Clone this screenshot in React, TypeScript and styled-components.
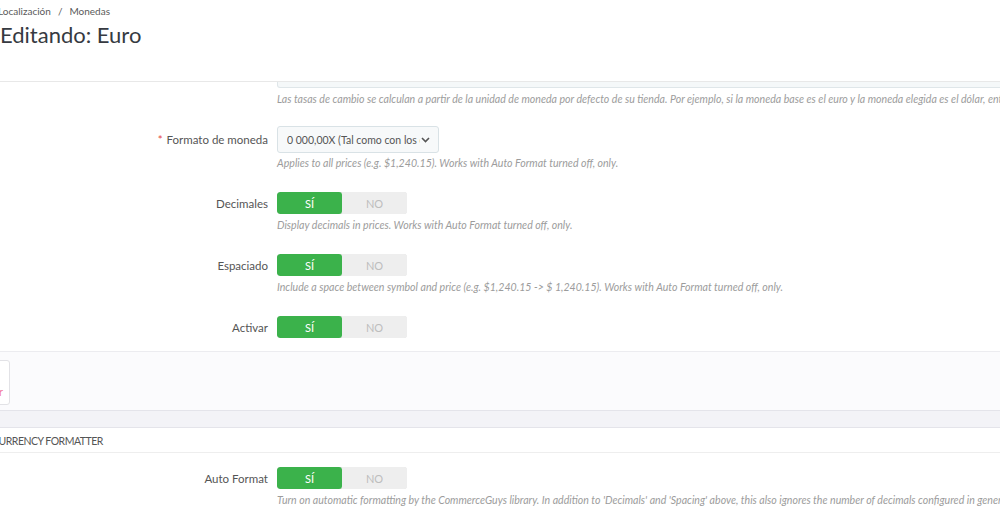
import React from 'react'
import styled, { createGlobalStyle } from 'styled-components'

const GlobalStyle = createGlobalStyle`
  html, body {
    margin: 0;
    padding: 0;
    background: #ffffff;
    overflow: hidden;
  }
  body {
    font-family: Lato, "Open Sans", Arial, sans-serif;
    color: #555555;
  }
`

const Page = styled.div`
  width: 1100px;
  margin-left: -60px;
`

const Header = styled.header`
  height: 82px;
  padding-left: 58px;
  border-bottom: 1px solid #e8e8e8;
  box-sizing: border-box;
  background: #ffffff;
`

const Breadcrumb = styled.div`
  padding-top: 4px;
  font-size: 10px;
  line-height: 14px;
  color: #5a5a5a;

  span {
    margin: 0 7px;
  }
`

const Title = styled.h1`
  margin: 3px 0 0 2px;
  font-size: 22px;
  font-weight: 400;
  line-height: 28px;
  color: #363a41;
`

const Panel = styled.section`
  background: #ffffff;
`

const Form = styled.div<{ $bottom?: number }>`
  display: flex;
  flex-direction: column;
  padding-bottom: ${(p) => (p.$bottom ?? 13)}px;
`

const Group = styled.div<{ $gap?: number }>`
  display: grid;
  grid-template-columns: 328px 1fr;
  column-gap: 9px;
  margin-bottom: ${(p) => (p.$gap ?? 22)}px;
`

const Label = styled.label`
  grid-column: 1;
  display: flex;
  align-items: center;
  justify-content: flex-end;
  font-size: 11.5px;
  color: #555555;

  b {
    color: #e5483f;
    font-weight: 400;
    margin-right: 4px;
  }
`

const Control = styled.div`
  grid-column: 2;
  display: flex;
  align-items: center;
`

const Help = styled.p<{ $top?: number }>`
  grid-column: 2;
  margin: ${(p) => (p.$top ?? 4)}px 0 0;
  font-size: 10.6px;
  line-height: 14px;
  font-style: italic;
  color: #9c9c9c;
  white-space: nowrap;
`

const InputStub = styled.div`
  grid-column: 2;
  height: 5px;
  background: #f5f8f9;
  border: 1px solid #dfe6e9;
  border-top: none;
  border-radius: 0 0 3px 3px;
`

const Select = styled.div`
  width: 162px;
  height: 27px;
  box-sizing: border-box;
  display: flex;
  align-items: center;
  justify-content: space-between;
  padding: 0 8px 0 9px;
  background: #f7f9fa;
  border: 1px solid #d9e2e6;
  border-radius: 3px;
  font-size: 10.5px;
  color: #555555;
  white-space: nowrap;
  overflow: hidden;

  span {
    overflow: hidden;
    width: 133px;
  }
`

const Switch = styled.div`
  display: flex;
  width: 130px;
  height: 22px;
  border-radius: 3px;
  overflow: hidden;
  box-shadow: inset 0 0 0 1px #e2e2e2;
`

const SwitchHalf = styled.span<{ $on?: boolean }>`
  flex: 1;
  display: flex;
  align-items: center;
  justify-content: center;
  font-size: 11px;
  background: ${(p) => (p.$on ? '#3bb24b' : '#eeeeee')};
  color: ${(p) => (p.$on ? '#ffffff' : '#bdbdbd')};
  border-radius: ${(p) => (p.$on ? '3px' : '0')};
`

const Footer = styled.div`
  height: 59px;
  box-sizing: border-box;
  display: flex;
  align-items: center;
  background: #fbfbfd;
  border-top: 1px solid #ececf0;
`

const FooterButton = styled.button`
  width: 70px;
  height: 45px;
  margin-top: 2px;
  display: flex;
  flex-direction: column;
  align-items: center;
  justify-content: flex-end;
  padding: 0 0 6px 14px;
  background: #ffffff;
  border: 1px solid #e2e2e6;
  border-radius: 3px;
  font-family: inherit;
  font-size: 11px;
  color: #f27fa0;
`

const Spacer = styled.div`
  height: 18px;
  box-sizing: border-box;
  background: #f3f3f7;
  border-top: 1px solid #e4e4ea;
  border-bottom: 1px solid #e4e4ea;
`

const PanelHeading = styled.h3`
  margin: 0 0 14px;
  height: 25px;
  box-sizing: border-box;
  padding: 6px 0 0 52px;
  font-size: 10.5px;
  letter-spacing: -0.5px;
  font-weight: 400;
  line-height: 14px;
  text-transform: uppercase;
  color: #555555;
  border-bottom: 1px solid #eeeeee;
`

const YesNo = () => (
  <Switch>
    <SwitchHalf $on>SÍ</SwitchHalf>
    <SwitchHalf>NO</SwitchHalf>
  </Switch>
)

const Chevron = () => (
  <svg width="9" height="6" viewBox="0 0 9 6">
    <path d="M1 1l3.5 3.5L8 1" fill="none" stroke="#555" strokeWidth="1.6" />
  </svg>
)

export default function App(): React.ReactElement {
  return (
    <Page>
      <GlobalStyle />
      <Header>
        <Breadcrumb>
          Localización<span>/</span>Monedas
        </Breadcrumb>
        <Title>Editando: Euro</Title>
      </Header>

      <Panel>
        <Form>
          <Group $gap={20}>
            <InputStub />
            <Help>
              Las tasas de cambio se calculan a partir de la unidad de moneda por defecto de su tienda. Por ejemplo, si la moneda base es el euro y la moneda elegida es el dólar, entonces escriba "1.20" (1&euro; = $1.20).
            </Help>
          </Group>

          <Group>
            <Label>
              <b>*</b>Formato de moneda
            </Label>
            <Control>
              <Select>
                <span>0 000,00X (Tal como con los euros)</span>
                <Chevron />
              </Select>
            </Control>
            <Help $top={3}>
              Applies to all prices (e.g. $1,240.15). Works with Auto Format turned off, only.
            </Help>
          </Group>

          <Group>
            <Label>Decimales</Label>
            <Control>
              <YesNo />
            </Control>
            <Help>Display decimals in prices. Works with Auto Format turned off, only.</Help>
          </Group>

          <Group>
            <Label>Espaciado</Label>
            <Control>
              <YesNo />
            </Control>
            <Help>
              Include a space between symbol and price (e.g. $1,240.15 -&gt; $ 1,240.15). Works with Auto Format turned off, only.
            </Help>
          </Group>

          <Group $gap={0}>
            <Label>Activar</Label>
            <Control>
              <YesNo />
            </Control>
          </Group>
        </Form>

        <Footer>
          <FooterButton>Cancelar</FooterButton>
        </Footer>
      </Panel>

      <Spacer />

      <Panel>
        <PanelHeading>Currency Formatter</PanelHeading>
        <Form>
          <Group>
            <Label>Auto Format</Label>
            <Control>
              <YesNo />
            </Control>
            <Help>
              Turn on automatic formatting by the CommerceGuys library. In addition to 'Decimals' and 'Spacing' above, this also ignores the number of decimals configured in general settings.
            </Help>
          </Group>
        </Form>
      </Panel>
    </Page>
  )
}
